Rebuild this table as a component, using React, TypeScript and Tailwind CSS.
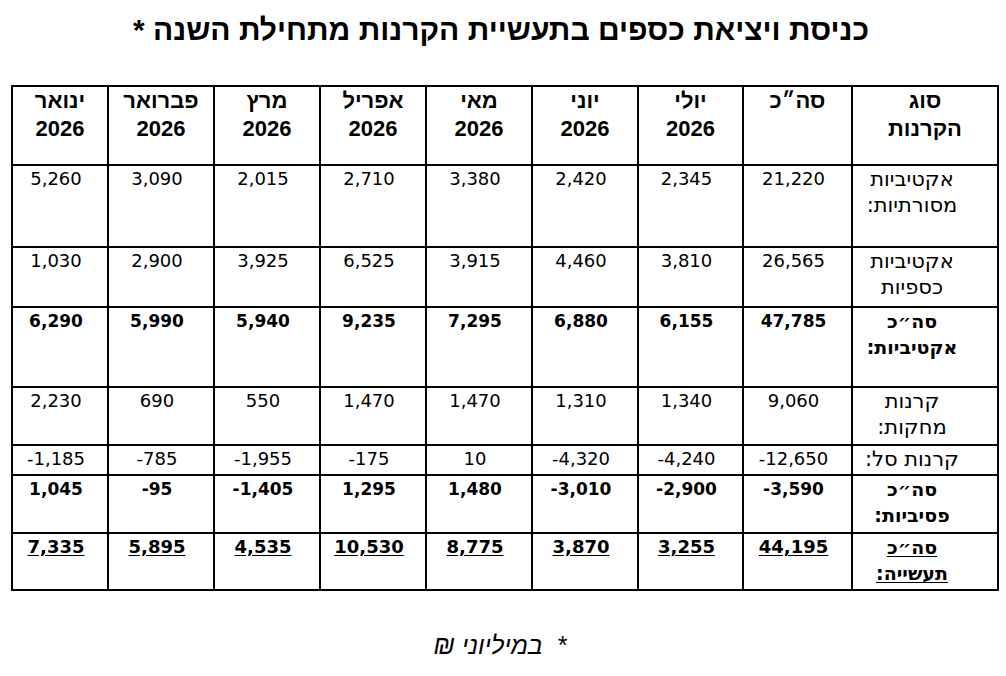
const months = ["יולי", "יוני", "מאי", "אפריל", "מרץ", "פברואר", "ינואר"];

type Row = {
  label: string[];
  total: string;
  values: string[];
  kind?: "bold" | "total";
  h: string;
};

// values are in column order right-to-left: יולי ... ינואר
const rows: Row[] = [
  {
    label: ["אקטיביות", "מסורתיות:"],
    total: "21,220",
    values: ["2,345", "2,420", "3,380", "2,710", "2,015", "3,090", "5,260"],
    h: "h-[82px]",
  },
  {
    label: ["אקטיביות", "כספיות"],
    total: "26,565",
    values: ["3,810", "4,460", "3,915", "6,525", "3,925", "2,900", "1,030"],
    h: "h-[60px]",
  },
  {
    label: ["סה״כ", "אקטיביות:"],
    total: "47,785",
    values: ["6,155", "6,880", "7,295", "9,235", "5,940", "5,990", "6,290"],
    kind: "bold",
    h: "h-[80px]",
  },
  {
    label: ["קרנות", "מחקות:"],
    total: "9,060",
    values: ["1,340", "1,310", "1,470", "1,470", "550", "690", "2,230"],
    h: "h-[58px]",
  },
  {
    label: ["קרנות סל:"],
    total: "-12,650",
    values: ["-4,240", "-4,320", "10", "-175", "-1,955", "-785", "-1,185"],
    h: "h-[30px]",
  },
  {
    label: ["סה״כ", "פסיביות:"],
    total: "-3,590",
    values: ["-2,900", "-3,010", "1,480", "1,295", "-1,405", "-95", "1,045"],
    kind: "bold",
    h: "h-[58px]",
  },
  {
    label: ["סה״כ", "תעשייה:"],
    total: "44,195",
    values: ["3,255", "3,870", "8,775", "10,530", "4,535", "5,895", "7,335"],
    kind: "total",
    h: "h-[57px]",
  },
];

const widths = ["w-[146px]", "w-[109px]", "w-[105px]", "w-[106px]", "w-[106px]", "w-[106px]", "w-[106px]", "w-[106px]", "w-[96px]"];

function NumCell({ value, kind }: { value: string; kind?: Row["kind"] }) {
  return (
    <td className="border-2 border-black align-top text-center p-0 pr-[8px]">
      <span
        dir="ltr"
        className={
          kind === "total"
            ? "font-bold underline underline-offset-2 text-[18px] leading-[26px]"
            : kind === "bold"
              ? "font-bold text-[17px] leading-[26px]"
              : "text-[18px] leading-[26px]"
        }
      >
        {value}
      </span>
    </td>
  );
}

export default function App() {
  return (
    <div
      className="w-[1006px] h-[676px] bg-white text-black overflow-hidden"
      style={{ fontFamily: '"DejaVu Sans", "Liberation Sans", sans-serif' }}
    >
      <h1 dir="rtl" className="text-center font-bold text-[30px] leading-[36px] pt-[12px] pr-[4px] font-['Liberation_Sans','DejaVu_Sans',sans-serif]">
        כניסת ויציאת כספים בתעשיית הקרנות מתחילת השנה *
      </h1>

      <div className="pl-[11px] pt-[37px]">
        <table dir="rtl" className="table-fixed border-collapse border-2 border-black w-[986px]">
          <colgroup>
            {widths.map((w, i) => (
              <col key={i} className={w} />
            ))}
          </colgroup>
          <thead>
            <tr className="h-[79px]">
              <th className="border-2 border-black align-top text-center p-0 font-bold text-[22px] leading-[28px] font-['Liberation_Sans','DejaVu_Sans',sans-serif]">
                סוג
                <br />
                הקרנות
              </th>
              <th className="border-2 border-black align-top text-center p-0 font-bold text-[22px] leading-[28px] font-['Liberation_Sans','DejaVu_Sans',sans-serif]">
                סה״כ
              </th>
              {months.map((m) => (
                <th
                  key={m}
                  className="border-2 border-black align-top text-center p-0 font-bold text-[22px] leading-[28px] font-['Liberation_Sans','DejaVu_Sans',sans-serif]"
                >
                  {m}
                  <br />
                  2026
                </th>
              ))}
            </tr>
          </thead>
          <tbody>
            {rows.map((r, i) => (
              <tr key={i} className={r.h}>
                <td
                  className={
                    r.kind === "total"
                      ? "border-2 border-black align-top text-center p-0 pr-[26px] font-bold underline underline-offset-2 text-[19px] leading-[26px]"
                      : r.kind === "bold"
                        ? "border-2 border-black align-top text-center p-0 pr-[26px] font-bold text-[19px] leading-[26px]"
                        : "border-2 border-black align-top text-center p-0 pr-[26px] text-[21px] leading-[26px]"
                  }
                >
                  {r.label.map((l, j) => (
                    <div key={j}>{l}</div>
                  ))}
                </td>
                <NumCell value={r.total} kind={r.kind} />
                {r.values.map((v, j) => (
                  <NumCell key={j} value={v} kind={r.kind} />
                ))}
              </tr>
            ))}
          </tbody>
        </table>
      </div>

      <p dir="rtl" className="text-center italic text-[25px] pt-[36px] pr-[6px] font-['Liberation_Sans','DejaVu_Sans',sans-serif]">
        *&nbsp;&nbsp;במיליוני ₪
      </p>
    </div>
  );
}
